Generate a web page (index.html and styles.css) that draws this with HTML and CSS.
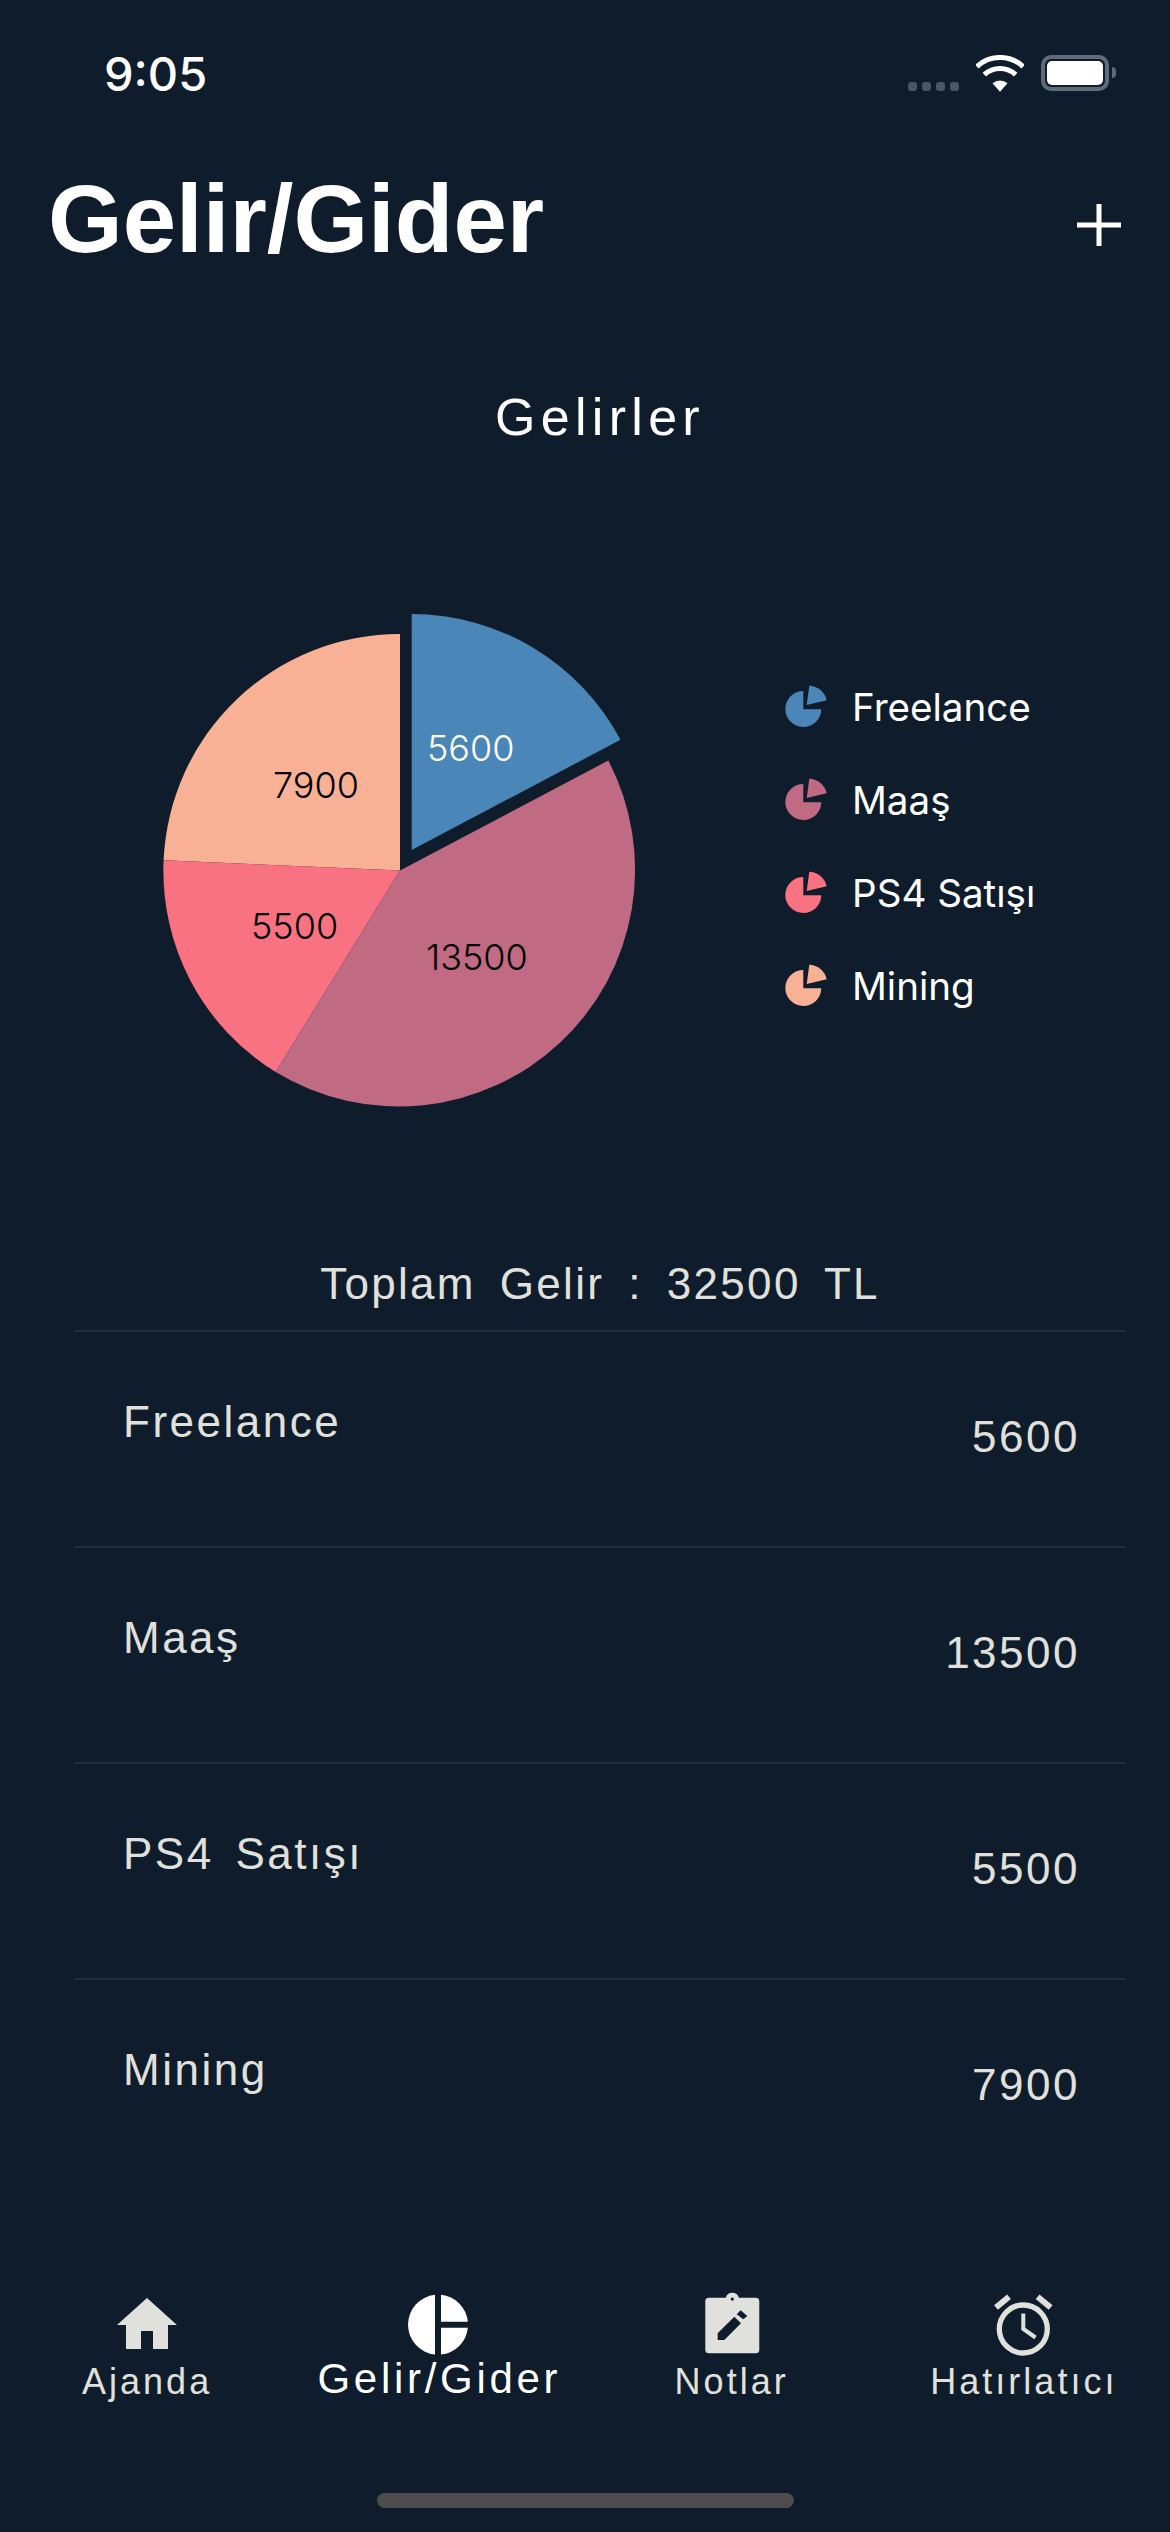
FILE: index.html
```html
<!DOCTYPE html>
<html lang="tr">
<head>
<meta charset="utf-8">
<title>Gelir/Gider</title>
<link rel="stylesheet" href="styles.css">
</head>
<body>
<div class="page">
  <div class="status">
    <span class="time">9:05</span>
    <div class="status-icons">
      <div class="dots"><i></i><i></i><i></i><i></i></div>
      <svg class="wifi" width="48" height="37" viewBox="0 0 48 37">
        <path class="wifi-arc" d="M0.8 11.6A34 34 0 0 1 47.2 11.6"/>
        <path class="wifi-arc" d="M8.3 19.7A23 23 0 0 1 39.7 19.7"/>
        <path class="wifi-dot" d="M16.5 28.2A11.5 11.5 0 0 1 31.5 28.2L24 36.8Z"/>
      </svg>
      <div class="battery"><div class="battery-fill"></div></div>
      <div class="battery-cap"></div>
    </div>
  </div>

  <header class="header">
    <h1 class="title">Gelir/Gider</h1>
    <svg class="plus" width="44" height="42" viewBox="0 0 44 42"><path d="M0 21H44M22 0V42"/></svg>
  </header>

  <main class="main">
    <h2 class="heading">Gelirler</h2>
    <section class="chart-row">
      <svg class="pie" width="520" height="530" viewBox="140 590 520 530">
        <path class="s-salmon" d="M400 870.6L163.6 860.3A236.6 236.6 0 0 1 400 634Z"/>
        <path class="s-pink" d="M400 870.6L275.7 1072.1A236.6 236.6 0 0 1 163.6 860.3Z"/>
        <path class="s-mauve" d="M400 870.6L608.3 760.5A236.6 236.6 0 0 1 275.7 1072.1Z"/>
        <path class="s-blue" d="M411.7 850V614A236.6 236.6 0 0 1 620.5 739.8Z"/>
        <text class="pie-label light" x="427" y="761">5600</text>
        <text class="pie-label" x="273" y="797.5">7900</text>
        <text class="pie-label" x="251" y="938.5">5500</text>
        <text class="pie-label" x="426" y="970">13500</text>
      </svg>
      <ul class="legend">
        <li class="legend-item">
          <svg class="legend-icon s-blue" width="52" height="52" viewBox="0 0 52 52"><path d="M23.3 10V28.3H41.3A18 18 0 1 1 23.3 10Z"/><path d="M26.7 24L29.3 4.7A18.5 18.5 0 0 1 46.7 19.3Z"/></svg>
          <span>Freelance</span>
        </li>
        <li class="legend-item">
          <svg class="legend-icon s-mauve" width="52" height="52" viewBox="0 0 52 52"><path d="M23.3 10V28.3H41.3A18 18 0 1 1 23.3 10Z"/><path d="M26.7 24L29.3 4.7A18.5 18.5 0 0 1 46.7 19.3Z"/></svg>
          <span>Maaş</span>
        </li>
        <li class="legend-item">
          <svg class="legend-icon s-pink" width="52" height="52" viewBox="0 0 52 52"><path d="M23.3 10V28.3H41.3A18 18 0 1 1 23.3 10Z"/><path d="M26.7 24L29.3 4.7A18.5 18.5 0 0 1 46.7 19.3Z"/></svg>
          <span>PS4 Satışı</span>
        </li>
        <li class="legend-item">
          <svg class="legend-icon s-salmon" width="52" height="52" viewBox="0 0 52 52"><path d="M23.3 10V28.3H41.3A18 18 0 1 1 23.3 10Z"/><path d="M26.7 24L29.3 4.7A18.5 18.5 0 0 1 46.7 19.3Z"/></svg>
          <span>Mining</span>
        </li>
      </ul>
    </section>
    <p class="total">Toplam Gelir : 32500 TL</p>
    <ul class="rows">
      <li class="row"><span class="row-name">Freelance</span><span class="row-value">5600</span></li>
      <li class="row"><span class="row-name">Maaş</span><span class="row-value">13500</span></li>
      <li class="row"><span class="row-name">PS4 Satışı</span><span class="row-value">5500</span></li>
      <li class="row"><span class="row-name">Mining</span><span class="row-value">7900</span></li>
    </ul>
  </main>

  <nav class="tabs">
    <div class="tab">
      <svg class="tab-icon" width="80" height="80" viewBox="0 0 80 80"><path transform="translate(4 4) scale(3)" d="M10 20v-6h4v6h5v-8h3L12 3 2 12h3v8z"/></svg>
      <span class="tab-label">Ajanda</span>
    </div>
    <div class="tab active">
      <svg class="tab-icon" width="80" height="80" viewBox="0 0 80 80">
        <path d="M36 9.85A30 30 0 0 0 36 69.55Z"/>
        <path d="M42 9.85A30 30 0 0 1 68.85 36.7H42Z"/>
        <path d="M42 42.7H68.85A30 30 0 0 1 42 69.55Z"/>
      </svg>
      <span class="tab-label">Gelir/Gider</span>
    </div>
    <div class="tab">
      <svg class="tab-icon" width="80" height="80" viewBox="0 0 80 80">
        <g transform="translate(4 0)">
          <path fill-rule="evenodd" d="M12.8 12.7H29.7A6.9 6.9 0 0 1 42.9 12.7H59.8A3.5 3.5 0 0 1 63.3 16.2V64.8A3.5 3.5 0 0 1 59.8 68.3H12.8A3.5 3.5 0 0 1 9.3 64.8V16.2A3.5 3.5 0 0 1 12.8 12.7ZM36.3 12.5A1.6 1.6 0 1 0 36.3 15.7A1.6 1.6 0 1 0 36.3 12.5ZM21.7 55V48.3L38.3 31.7L45 38.3L28.3 55ZM40.7 29.3L44.7 25.3L51.3 31L47.3 34.3Z"/>
        </g>
      </svg>
      <span class="tab-label">Notlar</span>
    </div>
    <div class="tab">
      <svg class="tab-icon alarm" width="80" height="80" viewBox="0 0 80 80">
        <g transform="translate(1 0)">
          <circle cx="38.3" cy="44" r="24"/>
          <path class="alarm-hand" d="M38.3 28.5V44L50.5 52.5"/>
          <path class="alarm-bell" d="M11 22.5L24 11.7M65.6 22.5L52.6 11.7"/>
        </g>
      </svg>
      <span class="tab-label">Hatırlatıcı</span>
    </div>
  </nav>
  <div class="home-bar"></div>
</div>
</body>
</html>
```
FILE: styles.css
```css
* { box-sizing: border-box; }
html, body { margin: 0; padding: 0; }
body { background: #0e1c2b; font-family: "Liberation Sans", Arial, sans-serif; color: #e0e1dd; }
ul { list-style: none; margin: 0; padding: 0; }
h1, h2, p { margin: 0; font-weight: 400; }

.page { width: 1170px; height: 2532px; overflow: hidden; display: flex; flex-direction: column; }

.status { height: 159px; display: flex; justify-content: space-between; align-items: flex-start; padding: 46px 54px 0 104px; flex: none; }
.time { font-family: Inter, sans-serif; font-weight: 500; font-size: 47px; line-height: 56px; color: #fff; }
.status-icons { display: flex; align-items: flex-start; padding-top: 9px; }
.dots { display: flex; gap: 5px; margin-top: 27px; margin-right: 17px; }
.dots i { display: block; width: 9px; height: 9px; border-radius: 3px; background: #4a5662; }
.wifi { margin-right: 17px; }
.wifi-arc { fill: none; stroke: #fff; stroke-width: 5; }
.wifi-dot { fill: #fff; }
.battery { width: 68px; height: 36px; border: 4px solid #5f6b78; border-radius: 10px; padding: 2px; }
.battery-fill { width: 100%; height: 100%; background: #fff; border-radius: 5px; }
.battery-cap { width: 4px; height: 11px; margin: 12px 0 0 3px; background: #5f6b78; border-radius: 0 6px 6px 0; }

.header { height: 120px; display: flex; justify-content: space-between; align-items: flex-start; padding: 0 49px 0 48px; flex: none; }
.title { font-size: 96px; line-height: 120px; font-weight: 700; color: #fff; }
.plus { margin-top: 45px; }
.plus path { stroke: #fff; stroke-width: 5; fill: none; }

.main { padding: 0 44px 0 74px; flex: none; }
.heading { margin-top: 108px; font-size: 52px; line-height: 60px; letter-spacing: 5.3px; text-align: center; color: #fff; }

.chart-row { display: flex; align-items: flex-start; margin-top: 143px; }
.pie { margin-left: 66px; flex: none; }
.s-blue { fill: #4b86b8; }
.s-mauve { fill: #c06a84; }
.s-pink { fill: #f87282; }
.s-salmon { fill: #f8b195; }
.pie-label { font-family: Inter, sans-serif; font-size: 36px; font-weight: 300; fill: #000; }
.pie-label.light { fill: #fff; }

.legend { margin: 70px 0 0 120px; }
.legend-item { height: 93px; display: flex; align-items: center; gap: 20px; font-family: Inter, sans-serif; font-size: 38.6px; color: #fff; }
.legend-icon { flex: none; }

.total { margin-top: 139px; font-size: 44px; line-height: 50px; letter-spacing: 2.3px; word-spacing: 9.5px; text-align: center; }

.rows { margin-top: 21px; }
.row { height: 216px; border-top: 2px solid #1f2d3d; display: flex; justify-content: space-between; align-items: flex-start; padding: 65px 46px 0 49px; font-size: 44px; line-height: 50px; letter-spacing: 2.5px; word-spacing: 7px; }
.row-value { margin-top: 15px; }

.tabs { display: grid; grid-template-columns: repeat(4, 1fr); margin-top: 91px; padding-left: 1px; flex: none; }
.tab { display: flex; flex-direction: column; align-items: center; }
.tab-icon { fill: #e0e1dd; display: block; }
.tab-label { font-size: 36px; line-height: 40px; letter-spacing: 3px; margin-top: -3px; white-space: nowrap; }
.tab.active .tab-icon { fill: #fff; }
.tab.active .tab-label { font-size: 42px; line-height: 46px; letter-spacing: 3.7px; margin-top: -9px; color: #fff; }
.alarm { fill: none; stroke: #e0e1dd; stroke-width: 5.3; }
.alarm-hand { stroke-width: 4; }
.alarm-bell { stroke-width: 6; }

.home-bar { width: 417px; height: 15px; border-radius: 8px; background: #4d4d4d; margin: auto auto 24px; flex: none; }
```
